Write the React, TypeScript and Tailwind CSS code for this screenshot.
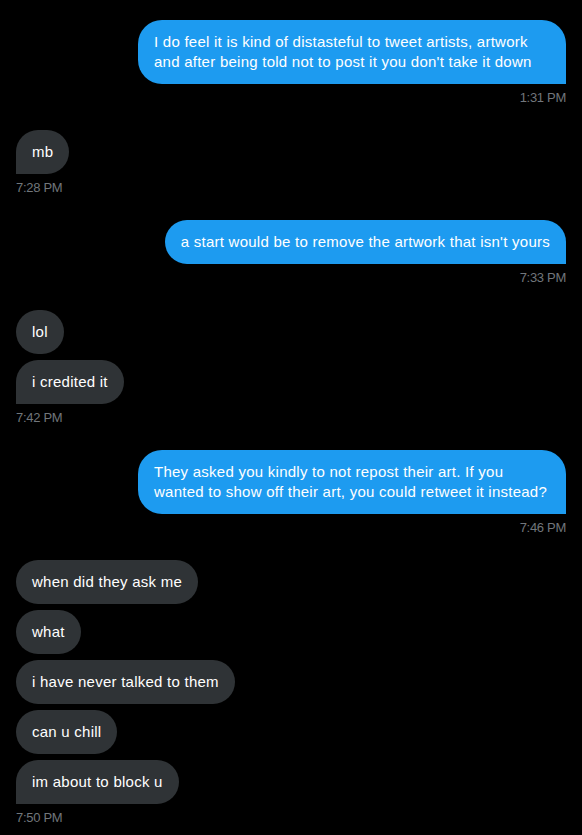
import React from 'react';

type Group = { mine: boolean; time: string; msgs: React.ReactNode[]; wide?: boolean };

const groups: Group[] = [
  {
    mine: true,
    time: '1:31 PM',
    msgs: [
      "I do feel it is kind of distasteful to tweet artists, artwork and after being told not to post it you don't take it down",
    ],
  },
  { mine: false, time: '7:28 PM', msgs: ['mb'] },
  { mine: true, time: '7:33 PM', msgs: ["a start would be to remove the artwork that isn't yours"] },
  { mine: false, time: '7:42 PM', msgs: ['lol', 'i credited it'] },
  {
    mine: true,
    time: '7:46 PM',
    wide: true,
    msgs: [
      <>
        They asked you kindly to not repost their art. If you
        <br />
        wanted to show off their art, you could retweet it instead?
      </>,
    ],
  },
  {
    mine: false,
    time: '7:50 PM',
    msgs: ['when did they ask me', 'what', 'i have never talked to them', 'can u chill', 'im about to block u'],
  },
];

const Bubble: React.FC<{ mine: boolean; last: boolean; wide?: boolean; children: React.ReactNode }> = ({
  mine,
  last,
  wide,
  children,
}) => {
  const base = `max-w-[428px] ${wide ? 'w-[428px]' : ''} px-4 py-3 text-[15px] leading-5 tracking-[0.25px] text-white rounded-3xl`;
  if (mine) {
    return <div className={`${base} bg-[#1d9bf0] ${last ? 'rounded-br-none' : ''}`}>{children}</div>;
  }
  return <div className={`${base} bg-[#2f3336] ${last ? 'rounded-bl-none' : ''}`}>{children}</div>;
};

export default function App() {
  return (
    <div
      className="min-h-screen bg-black px-4 pt-5 pb-2"
      style={{ fontFamily: '"Liberation Sans", Arial, sans-serif' }}
    >
      <div className="flex flex-col gap-6">
        {groups.map((g, gi) => (
          <div key={gi} className={`flex flex-col ${g.mine ? 'items-end' : 'items-start'}`}>
            <div className={`flex flex-col gap-1.5 ${g.mine ? 'items-end' : 'items-start'}`}>
              {g.msgs.map((m, mi) => (
                <Bubble key={mi} mine={g.mine} last={mi === g.msgs.length - 1} wide={g.wide}>
                  {m}
                </Bubble>
              ))}
            </div>
            <div className="mt-1.5 text-[13px] leading-4 tracking-[-0.3px] text-[#71767b]">{g.time}</div>
          </div>
        ))}
      </div>
    </div>
  );
}
